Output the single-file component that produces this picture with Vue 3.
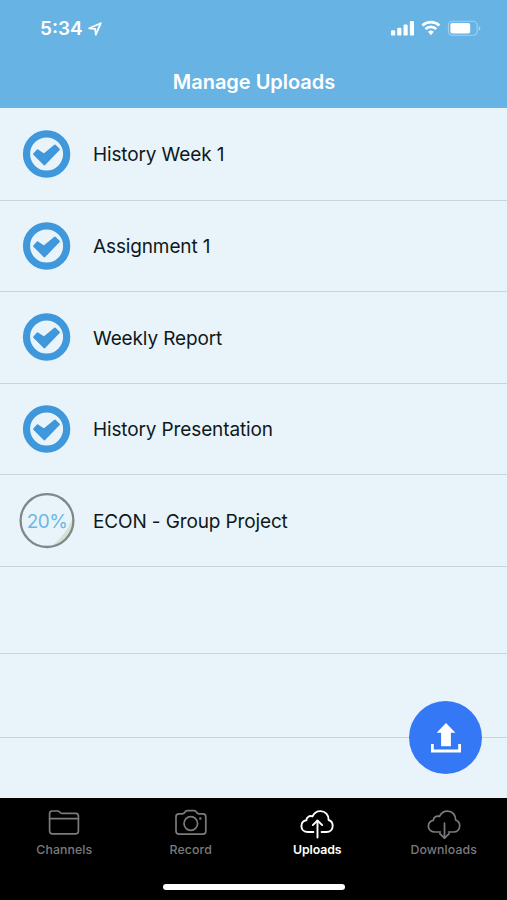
<template>
  <div class="screen">
    <header class="header">
      <div class="status">
        <div class="clock">
          <span>5:34</span>
          <svg class="location" width="14" height="14" viewBox="0 0 14 14">
            <path d="M1.2 6.3 12.8 1.2 7.8 12.6 7.2 6.9Z" />
          </svg>
        </div>
        <svg class="indicators" width="90" height="16" viewBox="0 0 90 16">
          <g fill="#fff">
            <rect x="0" y="10.2" width="4.2" height="5.4" rx="1.2" />
            <rect x="6.2" y="7.8" width="4.2" height="7.8" rx="1.2" />
            <rect x="12.5" y="4.6" width="4.2" height="11" rx="1.2" />
            <rect x="18.8" y="1" width="4.2" height="14.6" rx="1.2" />
            <path d="M37 11.8a4.6 4.6 0 0 1 5.8 0L39.9 15.2Z" />
            <rect x="59.4" y="3" width="19.8" height="10.6" rx="2" />
          </g>
          <g class="waves">
            <path d="M31.4 5.4a12.4 12.4 0 0 1 17 0" />
            <path d="M34.5 9.1a7.9 7.9 0 0 1 10.8 0" />
          </g>
          <rect class="battery" x="57.4" y="1.2" width="28.8" height="14" rx="4" />
          <path class="battery-tip" d="M87.8 6.2v4.4q1.6-.8 1.6-2.2t-1.6-2.2Z" />
        </svg>
      </div>
      <h1 class="title">Manage Uploads</h1>
    </header>

    <ul class="list">
      <li v-for="item in uploads" :key="item.name" class="row">
        <span v-if="item.progress < 100" class="progress">
          <svg width="56" height="56" viewBox="0 0 56 56">
            <path class="wedge" d="M53.6 25Q47.5 41.5 32.5 53.2A26 26 0 0 0 53.6 25Z" />
            <circle cx="28" cy="27.6" r="26.4" />
          </svg>
          <span class="percent">{{ item.progress }}%</span>
        </span>
        <svg v-else class="check" width="56" height="56" viewBox="0 0 56 56">
          <circle cx="27.6" cy="28" r="20.1" />
          <path d="M15 28.1 18.6 24.2 25 28.5 35.9 19.4 40 23.4 25.5 38.5Z" />
        </svg>
        <span class="name">{{ item.name }}</span>
      </li>
      <li class="row empty"></li>
      <li class="row empty last"></li>
    </ul>

    <button class="fab" aria-label="Upload">
      <svg width="32" height="32" viewBox="0 0 32 32">
        <path class="arrow" d="M16 1 25.4 10.8H20.9V24.2H11.1V10.8H6.6Z" />
        <path class="tray" d="M2.4 22V29H29.6V22" />
      </svg>
    </button>

    <nav class="tabs">
      <a v-for="tab in tabs" :key="tab.label" class="tab" :class="{ active: tab.active }">
        <svg width="36" height="32" viewBox="0 0 36 32">
          <path v-for="d in tab.paths" :key="d" :d="d" />
        </svg>
        <span>{{ tab.label }}</span>
      </a>
      <div class="home-bar"></div>
    </nav>
  </div>
</template>

<script setup>
import { ref } from 'vue'

const uploads = ref([
  { name: 'History Week 1', progress: 100 },
  { name: 'Assignment 1', progress: 100 },
  { name: 'Weekly Report', progress: 100 },
  { name: 'History Presentation', progress: 100 },
  { name: 'ECON - Group Project', progress: 20 }
])

// outline shared by both cloud tabs, open at the bottom for the arrow
const cloud = 'M14.4 24H9C5 24 2.4 21.6 2.4 18.2C2.4 15 4.5 12.8 7.4 12.3C7.4 9.2 10.6 7.2 13.5 8.4C15.1 4.9 18 3.1 21.4 3.1C26.3 3.1 29.8 7 29.6 12C32.1 12.9 33.7 15.1 33.7 17.8C33.7 21.5 31.1 24 27.5 24H22.6'

const tabs = [
  {
    label: 'Channels',
    paths: [
      'M6.2 3H11.6Q12.7 3 13.4 3.8L14.1 4.5Q14.8 5.3 16 5.3H29.8Q32.4 5.3 32.4 8V23.1Q32.4 25.8 29.8 25.8H6.4Q3.6 25.8 3.6 23.1V5.6Q3.6 3 6.2 3Z',
      'M3.6 10.7H32.4'
    ]
  },
  {
    label: 'Record',
    paths: [
      'M6 5.9H9Q10.5 5.9 11.3 4.9L12.2 3.7Q13 2.7 14.5 2.7H20.9Q22.4 2.7 23.2 3.7L24.1 4.9Q24.9 5.9 26.4 5.9H29.9Q32.8 5.9 32.8 8.8V23.2Q32.8 26.1 29.9 26.1H6Q3 26.1 3 23.2V8.8Q3 5.9 6 5.9Z',
      'M24.6 15.5A6.8 6.8 0 1 1 11 15.5A6.8 6.8 0 1 1 24.6 15.5Z',
      'M27 10.2H27.6V10.8H27Z'
    ]
  },
  { label: 'Uploads', active: true, paths: [cloud, 'M18.5 29.5V13', 'M13.8 17.1 18.5 12.5 23.2 17.1'] },
  { label: 'Downloads', paths: [cloud, 'M18.5 15V30', 'M13.8 25.7 18.5 30.2 23.2 25.7'] }
]
</script>

<style>
body { margin: 0; background: #000; }
</style>

<style scoped>
.screen {
  position: relative; width: 507px; height: 900px; overflow: hidden;
  display: flex; flex-direction: column;
  background: #e8f4fa; font-family: Inter, "Liberation Sans", sans-serif;
}
.header { height: 108px; flex-shrink: 0; background: #67b3e3; color: #fff; }
.status {
  height: 54px; box-sizing: border-box; padding: 20px 26px 0 40px;
  display: flex; justify-content: space-between; align-items: flex-start;
}
.clock { display: flex; align-items: center; gap: 5px; height: 17px; font-size: 19px; font-weight: 600; line-height: 17px; }
.location { fill: none; stroke: #fff; stroke-width: 1.8; stroke-linejoin: round; }
.waves { fill: none; stroke: #fff; stroke-width: 2.7; }
.battery { fill: none; stroke: #fff; stroke-width: 1.1; opacity: .4; }
.battery-tip { fill: #fff; opacity: .5; }
.title { margin: 0; height: 54px; padding-left: 1px; font-size: 20px; font-weight: 600; line-height: 57px; text-align: center; letter-spacing: -.03px; }

.list { flex: 1; margin: 0; padding: 1px 0 0; list-style: none; }
.row {
  box-sizing: border-box; height: 91.6px; padding-left: 19px;
  display: flex; align-items: center; border-bottom: 1px solid #c8d4dc;
}
.row.empty { height: 87px; }
.row.empty.last { height: 84px; }
.check { fill: #3f97dc; flex-shrink: 0; }
.check path { stroke: #3f97dc; stroke-width: 1.8; stroke-linejoin: round; }
.check circle { fill: none; stroke: #3f97dc; stroke-width: 7.2; }
.progress { position: relative; width: 56px; height: 56px; display: flex; align-items: center; justify-content: center; }
.progress svg { position: absolute; inset: 0; fill: none; stroke: #7f8789; stroke-width: 2.3; }
.progress .wedge { fill: #cfe5d2; stroke: none; }
.percent { position: relative; padding-top: 1px; font-size: 19px; letter-spacing: -.6px; color: #6db6e8; }
.name { margin-left: 18px; padding-top: 1.4px; font-size: 19px; letter-spacing: -.13px; color: #10181c; white-space: nowrap; }

.fab {
  position: absolute; left: 409px; top: 701px; width: 73px; height: 73px;
  padding: 0; border: none; border-radius: 50%; background: #3478f6;
  display: flex; align-items: center; justify-content: center;
}
.arrow { fill: #fff; }
.tray { fill: none; stroke: #fff; stroke-width: 2.8; }

.tabs {
  position: relative; height: 102px; flex-shrink: 0; box-sizing: border-box; padding-left: 1px;
  display: flex; background: #000;
}
.tab {
  flex: 1; padding-top: 10px; display: flex; flex-direction: column; align-items: center;
  color: #7b7b7b; font-size: 12.3px; font-weight: 500; line-height: 16px;
}
.tab svg { fill: none; stroke: currentColor; stroke-width: 1.7; stroke-linecap: round; stroke-linejoin: round; }
.tab span { margin-top: 2px; letter-spacing: .1px; }
.tab.active { color: #fff; }
.tab.active svg { stroke-width: 1.9; }
.tab.active span { font-weight: 600; letter-spacing: -.1px; }
.home-bar { position: absolute; left: 163px; bottom: 10px; width: 182px; height: 6px; border-radius: 3px; background: #fff; }
</style>
